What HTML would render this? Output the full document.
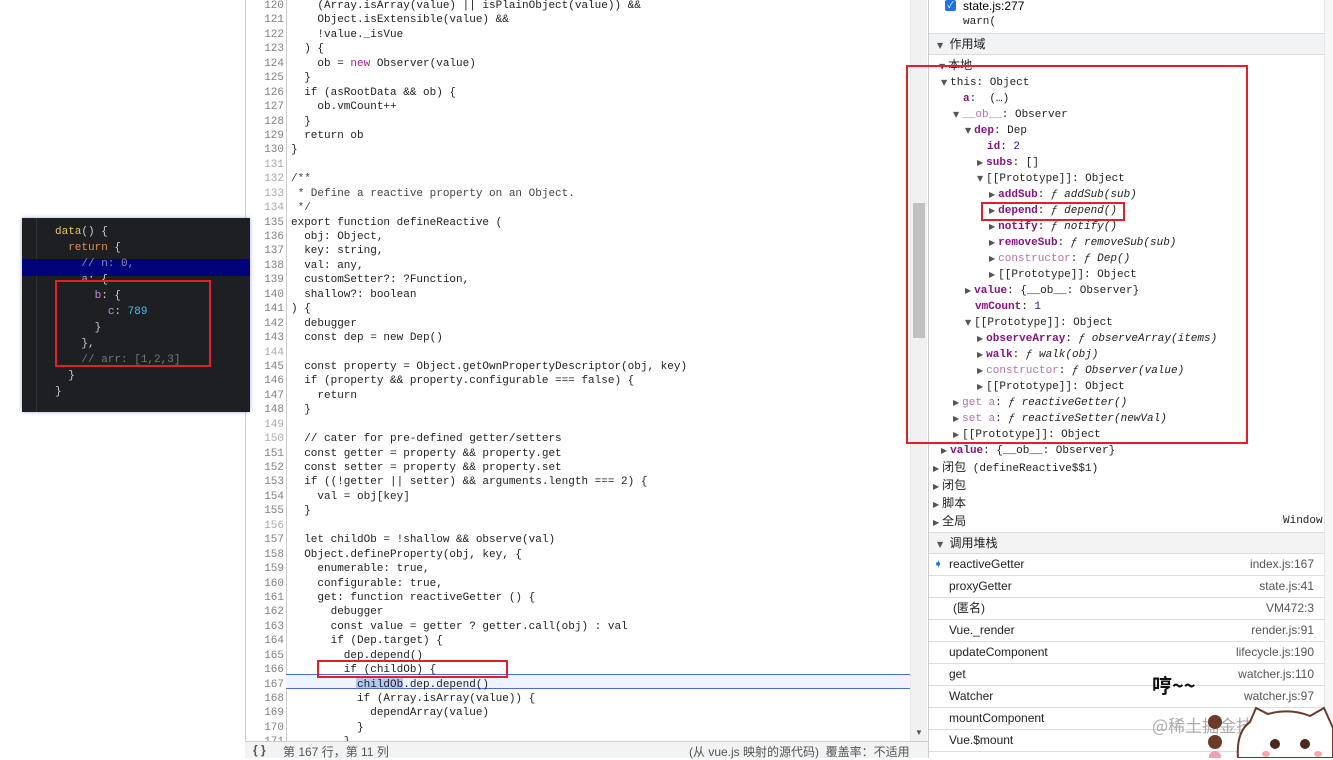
<!DOCTYPE html>
<html><head><meta charset="utf-8"><style>
*{margin:0;padding:0;box-sizing:border-box}
body{width:1333px;height:758px;overflow:hidden;background:#fff;position:relative;font-family:"Liberation Sans","Noto Sans CJK SC",sans-serif;}
.mono{font-family:"Liberation Mono","Noto Sans CJK SC",monospace;}
#code{position:absolute;left:245px;top:0;width:665px;height:741px;border-left:1px solid #cfcfcf;overflow:hidden;}
#code .ln{position:absolute;left:0;width:38px;text-align:right;color:#808080;font-size:11px;line-height:14.43px;top:-1px}
#code .gut{position:absolute;left:40px;top:0;height:741px;border-left:1px solid #ccc}
#code .tx{position:absolute;left:45px;top:-1px;font-size:11px;line-height:14.43px;color:#222;white-space:pre}
.kw{color:#9b2393}.cm{color:#444}.dim{color:#aaa}
#status{position:absolute;left:245px;top:741px;width:683px;height:17px;background:#f1f3f4;border-top:1px solid #ccc;font-size:12px;color:#555;white-space:pre}
#sb{position:absolute;left:910px;top:0;width:17px;height:741px;background:#f1f1f1;border-left:1px solid #e6e6e6}
#rp{position:absolute;left:928px;top:0;width:405px;height:758px;border-left:1px solid #ccc;background:#fff}
.t{position:absolute;font-size:11px;white-space:pre;color:#222;font-family:"Liberation Mono","Noto Sans CJK SC",monospace;line-height:16px}
.p{color:#881280;font-weight:bold}.pd{color:#b371b2}.i{font-style:italic}.f{color:#1a1aa6}
.tri{font-size:8px;color:#555;font-family:"DejaVu Sans",sans-serif;margin-right:3px}
.zh{font-family:"Liberation Sans","Noto Sans CJK SC",sans-serif;font-size:12px}
.hdr{position:absolute;left:0;width:395px;height:22px;background:#f1f3f4;border-top:1px solid #ddd;border-bottom:1px solid #ddd;font-size:12px;line-height:20px;padding-left:8px;color:#222}
.cs{position:absolute;left:0;width:395px;height:22px;border-bottom:1px solid #ddd;font-size:12px;line-height:21px;color:#222}
.cs span{position:absolute;right:10px;color:#555}
.red{position:absolute;border:2px solid #e0202a}
</style></head><body>

<div id="code">
<div class="ln mono">120<br>121<br>122<br>123<br>124<br>125<br>126<br>127<br>128<br>129<br>130<br><span class="dim">131</span><br><span class="dim">132</span><br><span class="dim">133</span><br><span class="dim">134</span><br>135<br>136<br>137<br>138<br>139<br>140<br>141<br>142<br>143<br><span class="dim">144</span><br>145<br>146<br>147<br>148<br><span class="dim">149</span><br><span class="dim">150</span><br>151<br>152<br>153<br>154<br>155<br><span class="dim">156</span><br>157<br>158<br>159<br>160<br>161<br>162<br>163<br>164<br>165<br>166<br>167<br>168<br>169<br>170<br>171</div>
<div class="gut"></div>
<div style="position:absolute;left:40px;top:674px;width:625px;height:15px;background:#eef3fd;border-top:1px solid #4a6fd0;border-bottom:1px solid #4a6fd0"></div>
<div style="position:absolute;left:110px;top:676px;width:47px;height:12px;background:#b3c8f0"></div>
<div class="tx mono">    (Array.isArray(value) || isPlainObject(value)) &amp;&amp;
    Object.isExtensible(value) &amp;&amp;
    !value._isVue
  ) {
    ob = <span class="kw">new</span> Observer(value)
  }
  if (asRootData &amp;&amp; ob) {
    ob.vmCount++
  }
  return ob
}

<span class="cm">/**</span>
<span class="cm"> * Define a reactive property on an Object.</span>
<span class="cm"> */</span>
export function defineReactive (
  obj: Object,
  key: string,
  val: any,
  customSetter?: ?Function,
  shallow?: boolean
) {
  debugger
  const dep = new Dep()

  const property = Object.getOwnPropertyDescriptor(obj, key)
  if (property &amp;&amp; property.configurable === false) {
    return
  }

  // cater for pre-defined getter/setters
  const getter = property &amp;&amp; property.get
  const setter = property &amp;&amp; property.set
  if ((!getter || setter) &amp;&amp; arguments.length === 2) {
    val = obj[key]
  }

  let childOb = !shallow &amp;&amp; observe(val)
  Object.defineProperty(obj, key, {
    enumerable: true,
    configurable: true,
    get: function reactiveGetter () {
      debugger
      const value = getter ? getter.call(obj) : val
      if (Dep.target) {
        dep.depend()
        if (childOb) {
          childOb.dep.depend()
          if (Array.isArray(value)) {
            dependArray(value)
          }
        }</div>
</div>
<div class="red" style="left:317px;top:660px;width:191px;height:18px"></div>

<div id="sb"><div style="position:absolute;left:2px;top:203px;width:12px;height:135px;background:#c1c1c1"></div><div style="position:absolute;left:4px;top:728px;font-size:8px;color:#555">▼</div></div>

<div id="status"><span style="position:absolute;left:8px;top:1px;font-weight:bold">{ }</span><span style="position:absolute;left:38px;top:1px">第 167 行，第 11 列</span><span style="position:absolute;left:444px;top:1px">(从 vue.js 映射的源代码)  覆盖率：不适用</span></div>

<div id="rp">
<div style="position:absolute;left:16px;top:0px;width:11px;height:11px;background:#1a73e8;border-radius:2px;color:#fff;font-size:9px;line-height:11px;text-align:center">✓</div>
<div class="zh" style="position:absolute;left:34px;top:-1px;font-size:12px">state.js:277</div>
<div class="t" style="left:34px;top:14px">warn(</div>
<div class="hdr" style="top:33px"><span class="tri">▼</span> 作用域</div>
<div class="t" style="left:10px;top:57px"><span class="tri">▼</span><span class="zh">本地</span></div>
<div class="t" style="left:12px;top:75px"><span class="tri">▼</span>this: Object</div>
<div class="t" style="left:34px;top:91px"><span class="p">a</span>:  (…)</div>
<div class="t" style="left:24px;top:107px"><span class="tri">▼</span><span class="pd">__ob__</span>: Observer</div>
<div class="t" style="left:36px;top:123px"><span class="tri">▼</span><span class="p">dep</span>: Dep</div>
<div class="t" style="left:58px;top:139px"><span class="p">id</span>: <span class="f">2</span></div>
<div class="t" style="left:48px;top:155px"><span class="tri">▶</span><span class="p">subs</span>: []</div>
<div class="t" style="left:48px;top:171px"><span class="tri">▼</span>[[Prototype]]: Object</div>
<div class="t" style="left:60px;top:187px"><span class="tri">▶</span><span class="p">addSub</span>: <span class="i">ƒ addSub(sub)</span></div>
<div class="t" style="left:60px;top:203px"><span class="tri">▶</span><span class="p">depend</span>: <span class="i">ƒ depend()</span></div>
<div class="t" style="left:60px;top:219px"><span class="tri">▶</span><span class="p">notify</span>: <span class="i">ƒ notify()</span></div>
<div class="t" style="left:60px;top:235px"><span class="tri">▶</span><span class="p">removeSub</span>: <span class="i">ƒ removeSub(sub)</span></div>
<div class="t" style="left:60px;top:251px"><span class="tri">▶</span><span class="pd">constructor</span>: <span class="i">ƒ Dep()</span></div>
<div class="t" style="left:60px;top:267px"><span class="tri">▶</span>[[Prototype]]: Object</div>
<div class="t" style="left:36px;top:283px"><span class="tri">▶</span><span class="p">value</span>: {__ob__: Observer}</div>
<div class="t" style="left:46px;top:299px"><span class="p">vmCount</span>: <span class="f">1</span></div>
<div class="t" style="left:36px;top:315px"><span class="tri">▼</span>[[Prototype]]: Object</div>
<div class="t" style="left:48px;top:331px"><span class="tri">▶</span><span class="p">observeArray</span>: <span class="i">ƒ observeArray(items)</span></div>
<div class="t" style="left:48px;top:347px"><span class="tri">▶</span><span class="p">walk</span>: <span class="i">ƒ walk(obj)</span></div>
<div class="t" style="left:48px;top:363px"><span class="tri">▶</span><span class="pd">constructor</span>: <span class="i">ƒ Observer(value)</span></div>
<div class="t" style="left:48px;top:379px"><span class="tri">▶</span>[[Prototype]]: Object</div>
<div class="t" style="left:24px;top:395px"><span class="tri">▶</span><span class="pd">get a</span>: <span class="i">ƒ reactiveGetter()</span></div>
<div class="t" style="left:24px;top:411px"><span class="tri">▶</span><span class="pd">set a</span>: <span class="i">ƒ reactiveSetter(newVal)</span></div>
<div class="t" style="left:24px;top:427px"><span class="tri">▶</span>[[Prototype]]: Object</div>
<div class="t" style="left:12px;top:443px"><span class="tri">▶</span><span class="p">value</span>: {__ob__: Observer}</div>
<div class="t" style="left:4px;top:459px"><span class="tri">▶</span><span class="zh">闭包</span> (defineReactive$$1)</div>
<div class="t" style="left:4px;top:477px"><span class="tri">▶</span><span class="zh">闭包</span></div>
<div class="t" style="left:4px;top:495px"><span class="tri">▶</span><span class="zh">脚本</span></div>
<div class="t" style="left:4px;top:513px"><span class="tri">▶</span><span class="zh">全局</span></div>
<div class="t" style="left:354px;top:513px">Window</div>
<div class="hdr" style="top:532px"><span class="tri">▼</span> 调用堆栈</div>
<div class="cs" style="top:554px"><b style="position:absolute;left:5px;color:#1a73e8;font-size:10px">➧</b><i style="position:absolute;left:20px;font-style:normal">reactiveGetter</i><span>index.js:167</span></div>
<div class="cs" style="top:576px"><i style="position:absolute;left:20px;font-style:normal">proxyGetter</i><span>state.js:41</span></div>
<div class="cs" style="top:598px"><i style="position:absolute;left:24px;font-style:normal">(匿名)</i><span>VM472:3</span></div>
<div class="cs" style="top:620px"><i style="position:absolute;left:20px;font-style:normal">Vue._render</i><span>render.js:91</span></div>
<div class="cs" style="top:642px"><i style="position:absolute;left:20px;font-style:normal">updateComponent</i><span>lifecycle.js:190</span></div>
<div class="cs" style="top:664px"><i style="position:absolute;left:20px;font-style:normal">get</i><span>watcher.js:110</span></div>
<div class="cs" style="top:686px"><i style="position:absolute;left:20px;font-style:normal">Watcher</i><span>watcher.js:97</span></div>
<div class="cs" style="top:708px"><i style="position:absolute;left:20px;font-style:normal">mountComponent</i><span></span></div>
<div class="cs" style="top:730px"><i style="position:absolute;left:20px;font-style:normal">Vue.$mount</i><span></span></div>
<div style="position:absolute;left:395px;top:0;width:10px;height:758px;background:#f7f7f7;border-left:1px solid #e6e6e6"></div>
</div>
<div class="red" style="left:906px;top:65px;width:342px;height:379px"></div>
<div class="red" style="left:981px;top:202px;width:144px;height:19px"></div>

<!-- left editor snippet -->
<div style="position:absolute;left:22px;top:218px;width:228px;height:194px;background:#1e1f22;box-shadow:0 0 4px #9bb4e0;overflow:hidden">
<div style="position:absolute;left:14px;top:0;height:194px;border-left:1px solid #333"></div>
<div style="position:absolute;left:0;top:41px;width:228px;height:17px;background:#02027a"></div>
<div class="mono" style="position:absolute;left:33px;top:6px;font-size:11px;line-height:16px;white-space:pre;color:#ccc"><span style="color:#e8c36a">data</span>() {
  <span style="color:#e58c4c">return</span> {
    <span style="color:#8a8ac0">// n: 0,</span>
    <span style="color:#c58fdc">a</span>: {
      <span style="color:#c58fdc">b</span>: {
        <span style="color:#c58fdc">c</span>: <span style="color:#4fb8e8">789</span>
      }
    },
    <span style="color:#777">// arr: [1,2,3]</span>
  }
}</div>
</div>
<div class="red" style="left:55px;top:280px;width:156px;height:87px"></div>

<!-- sticker -->
<div style="position:absolute;left:1152px;top:674px;font-size:20px;font-weight:bold;color:#111;font-family:'Noto Sans CJK SC',sans-serif;line-height:22px">哼~~</div>
<div style="position:absolute;left:1152px;top:712px;font-size:17px;color:rgba(150,150,150,.8);font-family:'Noto Sans CJK SC',sans-serif">@稀土掘金技术社区</div>
<svg style="position:absolute;left:1200px;top:700px" width="133" height="58">
<circle cx="15" cy="22" r="7" fill="#6b3b2a"/><circle cx="15" cy="42" r="7" fill="#6b3b2a"/><circle cx="15" cy="57" r="6" fill="#f0a0b0"/>
<path d="M38 58 Q36 32 50 22 L56 8 L68 14 Q90 8 110 16 L124 8 L133 28 L133 58 Z" fill="#fff" stroke="#6b3b2a" stroke-width="2"/>
<circle cx="75" cy="44" r="5" fill="#4a2a20"/><circle cx="105" cy="44" r="5" fill="#4a2a20"/>
<ellipse cx="66" cy="54" rx="4" ry="3" fill="#f4a8b0"/><ellipse cx="118" cy="54" rx="4" ry="3" fill="#f4a8b0"/>
</svg>
</body></html>
